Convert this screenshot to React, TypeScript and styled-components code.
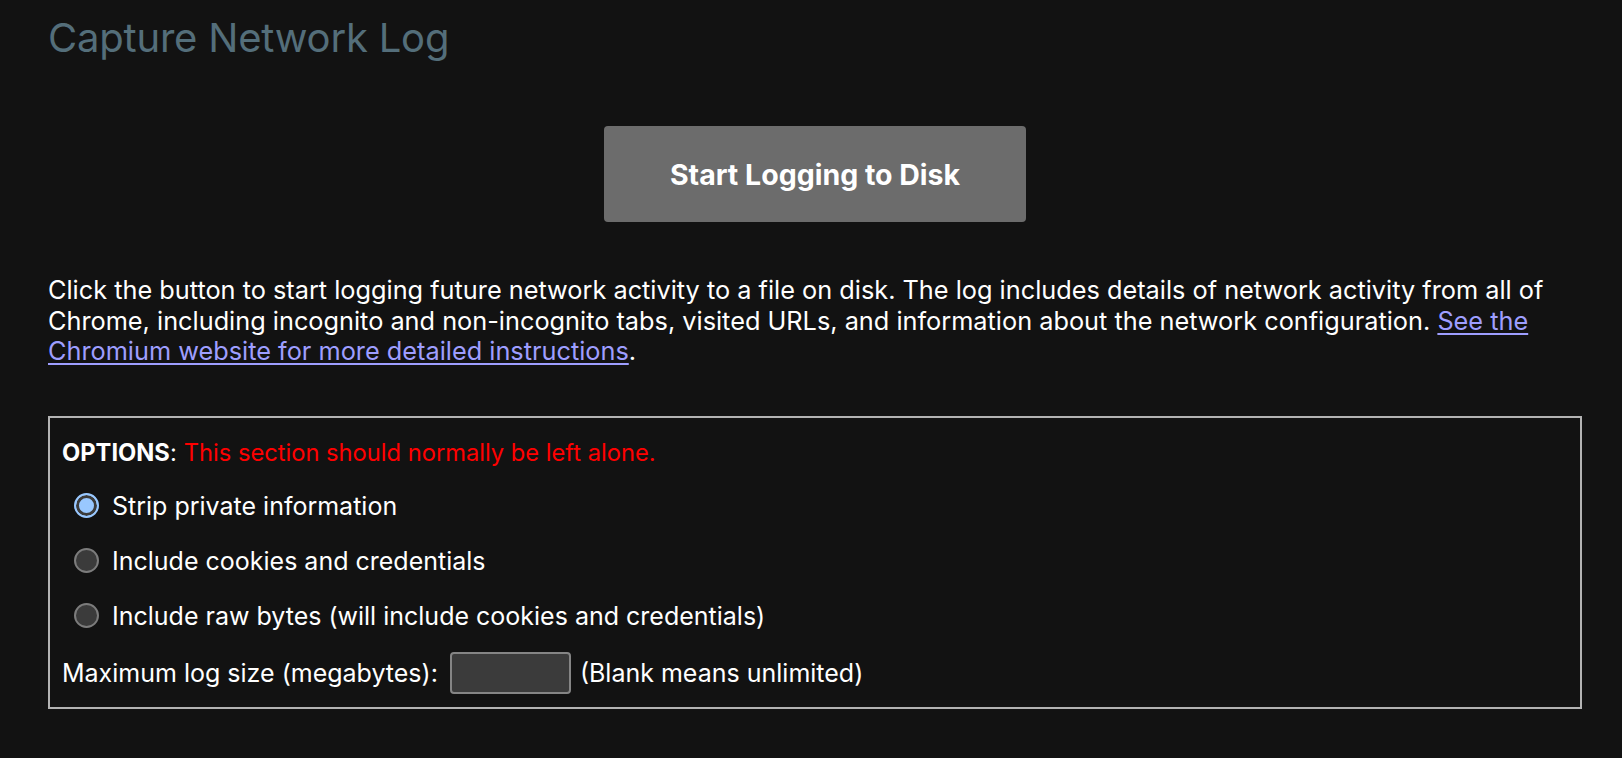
import * as React from 'react'
import styled, { createGlobalStyle } from 'styled-components'

const GlobalStyle = createGlobalStyle`
  html, body {
    margin: 0;
    padding: 0;
    background: #121212;
  }
  body {
    font-family: Inter, "Noto Sans", "Liberation Sans", sans-serif;
    color: #ffffff;
  }
`

const Page = styled.div`
  width: 1534px;
  padding: 0 39px 0 48px;
  min-height: 758px;
  box-sizing: content-box;
  background: #121212;
`

const Title = styled.h1`
  margin: 0;
  padding-top: 14px;
  font-size: 40px;
  font-weight: 400;
  line-height: 48px;
  color: #546e7a;
  letter-spacing: -0.2px;
`

const ButtonRow = styled.div`
  display: flex;
  justify-content: center;
  margin-top: 64px;
`

const StartButton = styled.button`
  width: 422px;
  height: 96px;
  border: none;
  border-radius: 4px;
  background: #6c6c6c;
  color: #ffffff;
  font-family: inherit;
  font-size: 28.5px;
  font-weight: 700;
  cursor: pointer;
`

const Intro = styled.p`
  margin: 53px 0 0 0;
  font-size: 25.3px;
  line-height: 30.5px;
`

const Link = styled.a`
  color: #9e9eff;
  text-decoration: underline;
  text-underline-offset: 3px;
`

const Options = styled.fieldset`
  margin: 49px 0 0 0;
  padding: 20px 12px 13px 12px;
  border: 2px solid #b3b3b3;
  display: flex;
  flex-direction: column;
`

const Line = styled.div<{ $gap?: number }>`
  display: flex;
  align-items: center;
  gap: 13px;
  min-height: 30px;
  font-size: 25px;
  line-height: 30px;
  margin-top: ${p => p.$gap ?? 0}px;
`

const Header = styled.div`
  font-size: 23.7px;
  line-height: 30px;
`

const Strong = styled.b`
  font-weight: 700;
`

const Warning = styled.span`
  color: #ff0000;
  margin-left: 7px;
`

const Radio = styled.input.attrs({ type: 'radio' })`
  appearance: none;
  -webkit-appearance: none;
  margin: 0 0 0 12px;
  width: 25px;
  height: 25px;
  border-radius: 50%;
  border: 2px solid #7c7c7c;
  background: #3b3b3b;
  box-sizing: border-box;
  flex-shrink: 0;

  &:checked {
    border: 2px solid #99c8ff;
    background: #99c8ff;
    box-shadow: inset 0 0 0 3px #3b3b3b;
  }
`

const SizeInput = styled.input`
  width: 121px;
  height: 42px;
  box-sizing: border-box;
  background: #3b3b3b;
  border: 2px solid #858585;
  border-radius: 4px;
  margin: 0 -4px 0 -1px;
`

export default function App() {
  return (
    <>
      <GlobalStyle />
      <Page>
        <Title>Capture Network Log</Title>
        <ButtonRow>
          <StartButton>Start Logging to Disk</StartButton>
        </ButtonRow>
        <Intro>
          Click the button to start logging future network activity to a file on disk. The log includes
          details of network activity from all of Chrome, including incognito and non-incognito tabs,
          visited URLs, and information about the network configuration.{' '}
          <Link href="#">See the Chromium website for more detailed instructions</Link>.
        </Intro>
        <Options>
          <Header>
            <Strong>OPTIONS</Strong>:<Warning>This section should normally be left alone.</Warning>
          </Header>
          <Line $gap={23}>
            <Radio name="mode" defaultChecked />
            <span>Strip private information</span>
          </Line>
          <Line $gap={25}>
            <Radio name="mode" />
            <span>Include cookies and credentials</span>
          </Line>
          <Line $gap={25}>
            <Radio name="mode" />
            <span>Include raw bytes (will include cookies and credentials)</span>
          </Line>
          <Line $gap={21}>
            <span>Maximum log size (megabytes):</span>
            <SizeInput />
            <span>(Blank means unlimited)</span>
          </Line>
        </Options>
      </Page>
    </>
  )
}
